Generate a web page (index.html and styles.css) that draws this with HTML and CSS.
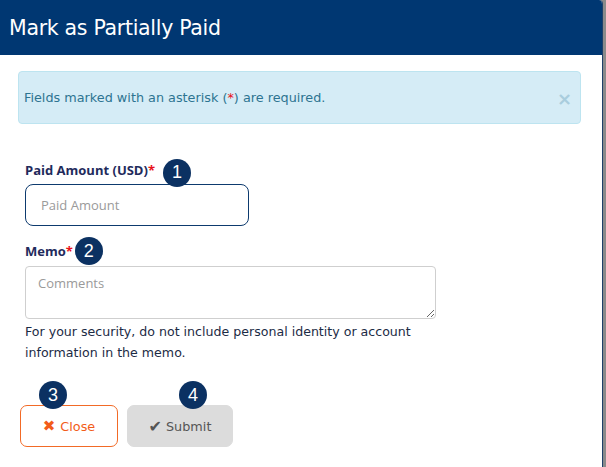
FILE: index.html
```html
<!DOCTYPE html>
<html>
<head>
<meta charset="utf-8">
<link rel="stylesheet" href="styles.css">
</head>
<body>
<div class="modal">
  <div class="modal-header">
    <h1 class="modal-title">Mark as Partially Paid</h1>
  </div>
  <div class="modal-body">
    <div class="alert">
      <span>Fields marked with an asterisk (<span class="req">*</span>) are required.</span>
      <span class="alert-close">&times;</span>
    </div>
    <div class="field">
      <div class="label-row">
        <label class="label">Paid Amount (USD)<span class="req">*</span></label>
        <span class="badge badge-1">1</span>
      </div>
      <input class="input" type="text" placeholder="Paid Amount">
    </div>
    <div class="field field-memo">
      <div class="label-row">
        <label class="label">Memo<span class="req">*</span></label>
        <span class="badge badge-2">2</span>
      </div>
      <textarea class="textarea" placeholder="Comments"></textarea>
      <p class="help">For your security, do not include personal identity or account information in the memo.</p>
    </div>
    <div class="actions">
      <div class="btn-wrap">
        <button class="btn btn-close"><span class="icon-x">&#10006;</span>Close</button>
        <span class="badge badge-3">3</span>
      </div>
      <div class="btn-wrap">
        <button class="btn btn-submit"><span class="icon-check">&#10004;</span>Submit</button>
        <span class="badge badge-4">4</span>
      </div>
    </div>
  </div>
</div>
</body>
</html>
```
FILE: styles.css
```css
html, body {
  margin: 0;
  padding: 0;
  background: #8a8a8a;
  height: 100%;
}
body {
  font-family: "DejaVu Sans", Tahoma, sans-serif;
  overflow: hidden;
}
.modal {
  width: 602px;
  height: 467px;
  background: #fff;
  border-right: 1px solid #1f3f6a;
  border-top-right-radius: 4px;
  overflow: hidden;
}
.modal-header {
  background: #003772;
  height: 55px;
  display: flex;
  align-items: center;
  padding-left: 9px;
}
.modal-title {
  margin: 0;
  color: #fff;
  font-size: 20.5px;
  font-weight: normal;
  letter-spacing: -0.3px;
}
.modal-body {
  padding: 16px 20px 0 18px;
}
.alert {
  width: 563px;
  box-sizing: border-box;
  height: 53px;
  background: #d5ecf6;
  border: 1px solid #bde4f0;
  border-radius: 4px;
  display: flex;
  align-items: center;
  justify-content: space-between;
  padding: 0 8px 0 5px;
  color: #2d7491;
  font-size: 12.8px;
}
.req {
  color: #e8101a;
}
.alert-close {
  color: #a9cddd;
  font-size: 18px;
  font-weight: bold;
  margin-top: 2px;
}
.field {
  margin-top: 33px;
  padding-left: 7px;
}
.label-row {
  display: flex;
  align-items: center;
  height: 26px;
}
.label {
  font-family: "Open Sans", sans-serif;
  font-size: 13px;
  font-weight: bold;
  color: #1f2b5c;
}
.badge {
  width: 28px;
  height: 28px;
  border-radius: 50%;
  background: #0b3162;
  color: #fff;
  font-family: "Liberation Sans", Arial, sans-serif;
  font-size: 18px;
  display: inline-flex;
  align-items: center;
  justify-content: center;
}
.badge-1 {
  margin-left: 8px;
  margin-top: 5px;
}
.badge-2 {
  margin-left: 2px;
}
.input {
  display: block;
  width: 224px;
  height: 42px;
  box-sizing: border-box;
  margin-top: 1px;
  border: 1px solid #0d3a6e;
  border-radius: 8px;
  padding: 0 15px;
  font-family: "Open Sans", sans-serif;
  font-size: 13px;
  outline: none;
}
.input::placeholder,
.textarea::placeholder {
  color: #9a9a9a;
}
.field-memo {
  margin-top: 12px;
}
.textarea {
  display: block;
  width: 411px;
  height: 53px;
  box-sizing: border-box;
  margin-top: 2px;
  border: 1px solid #cfcfcf;
  border-radius: 4px;
  padding: 7px 12px;
  font-family: "Open Sans", sans-serif;
  font-size: 13px;
  resize: vertical;
}
.help {
  margin: 2px 0 0 0;
  width: 400px;
  font-size: 12.6px;
  line-height: 21px;
  color: #1c2b45;
}
.actions {
  display: flex;
  gap: 9px;
  margin-top: 42px;
  padding-left: 2px;
}
.btn-wrap {
  position: relative;
}
.btn {
  height: 42px;
  border-radius: 7px;
  font-family: inherit;
  font-size: 12.8px;
  display: flex;
  align-items: center;
  justify-content: center;
  padding: 0;
}
.btn-close {
  width: 98px;
  background: #fff;
  border: 1px solid #f26a26;
  color: #f25c19;
}
.btn-submit {
  width: 106px;
  background: #dcdcdc;
  border: 1px solid #dcdcdc;
  color: #555;
}
.icon-x {
  color: #f25c19;
  font-size: 15px;
  margin-right: 5px;
}
.icon-check {
  color: #555;
  font-size: 16px;
  margin-right: 4px;
}
.btn-wrap .badge {
  position: absolute;
  top: -24px;
}
.badge-3 {
  left: 19px;
}
.badge-4 {
  left: 52px;
}
```
